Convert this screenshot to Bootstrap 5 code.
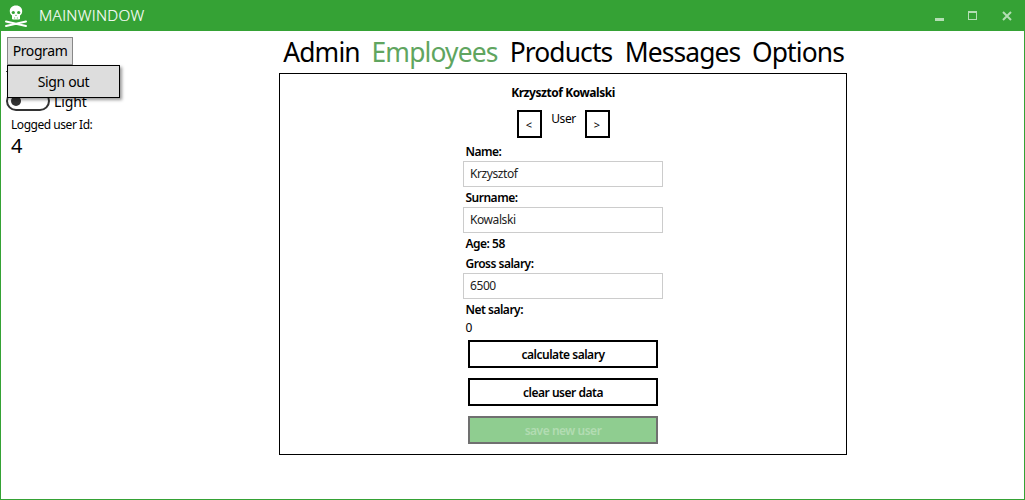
<!DOCTYPE html>
<html lang="en">
<head>
<meta charset="utf-8">
<title>MainWindow</title>
<link href="https://cdn.jsdelivr.net/npm/bootstrap@5.3.0/dist/css/bootstrap.min.css" rel="stylesheet">
<style>
body{font-family:"Noto Sans","Open Sans",sans-serif;font-size:12px;line-height:16px;color:#000;letter-spacing:-.42px}
.window{height:500px;border:1px solid #35a235;border-top:0}
.titlebar{height:31px;margin:0 -1px;background:#35a235;padding-left:4px}
.title-text{font-family:"Open Sans",sans-serif;font-size:15.4px;font-weight:300;letter-spacing:.3px;margin-left:11px;padding-top:1px;color:#fff;-webkit-text-stroke:.2px #fff}
.side{width:278px;padding:6px 0 0 6px}
.menu-btn{width:66px;height:28px;border:1px solid #888;background:#ddd;font-size:14px;letter-spacing:-.4px;padding:0;border-radius:0;color:#000;line-height:26px}
.drop{left:0;top:28px;width:113px;height:33px;min-width:0;background:#ddd;border:1px solid #000;border-radius:0;box-shadow:2px 2px 3px rgba(0,0,0,.4);font-size:14px;letter-spacing:-.35px;line-height:32px;text-align:center;padding:0;color:#000}
.theme-mark{width:2px;height:1px;background:#444;margin:6px 0 0 -1px}
.theme-row{height:20px;margin:19px 0 0 -1px;font-size:14px;letter-spacing:-.1px}
.theme-row .toggle{width:44px;height:20px;border:2px solid #333;border-radius:10px;padding-left:3px}
.toggle i{width:10px;height:10px;border-radius:50%;background:#333}
.caption{padding-top:2px}
.user-label{margin:6px 0 0 4px;letter-spacing:-.46px}
.user-id{margin-left:4px;line-height:25px;font-size:20px}
.tabs{display:grid;grid-template-columns:89px 137px 116px 127px 104px;margin-left:-2px;height:42px;font-size:26.4px;line-height:43px;text-align:center;letter-spacing:-.87px;white-space:nowrap}
.tabs .on{color:#60a560}
.panel{width:568px;height:382px;border:1px solid #000;padding-top:11px}
.panel .owner{letter-spacing:-.45px}
.prev-next{padding-top:9px}
.prev-next span{width:43px;padding:1px 0 0 1px}
.arrow{width:25px;height:28px;border:2px solid #000;border-radius:0;padding:0;font-size:11px;line-height:25px;color:#000}
.form{width:200px;margin:6px 0 0 183px}
.form label{display:block;height:17px;line-height:16px;padding-left:2.500px;font-weight:600;letter-spacing:-.5px}
.form .age{height:20px}
.form .net{height:21px;line-height:18px;padding-left:2.500px}
.form .form-control{height:26px;border:1px solid #ccc;border-radius:0;padding:0 6px 2px;font-size:12px;letter-spacing:-.42px;color:#222;margin-bottom:3px}
.act{display:block;width:190px;height:28px;margin:0 0 10px 5px;border:2px solid #000;border-radius:0;padding:0;font-size:12px;line-height:25px;font-weight:600;letter-spacing:-.48px;color:#000}
.act:disabled{opacity:1;background:#8fcd90;border-color:#707070;color:#b2dcb2}
</style>
</head>
<body>
<div class="window">
  <header class="titlebar d-flex align-items-center">
    <svg width="24" height="24" viewBox="0 0 24 24">
      <path d="M2 17.500 22 22M2 22 22 17.500" stroke="#fff" stroke-width="2" stroke-linecap="round"/>
      <path d="M12 1.500c-4 0-6.200 2.500-6.200 5.700 0 2 .8 3.300 2.200 4.200V15l1 .5h6l1-.5v-3.600c1.400-.9 2.200-2.200 2.200-4.200 0-3.200-2.200-5.700-6.200-5.700z" fill="#fff"/>
      <circle cx="9.300" cy="8.500" r="1.600" fill="#35a235"/><circle cx="14.700" cy="8.500" r="1.600" fill="#35a235"/>
      <path d="m12 10.500-.8 1.500h1.600zM10.300 13.500h.8v1h-.8zM12.900 13.500h.8v1h-.8z" fill="#35a235"/>
    </svg>
    <span class="title-text">MAINWINDOW</span>
    <svg class="ms-auto" width="90" height="31" viewBox="0 0 90 31" fill="none" stroke="#b4deb4" shape-rendering="crispEdges">
      <path d="M0 19.500h9" stroke-width="3"/>
      <path d="M33.500 11.500h8v8h-8zM33 12.500h9"/>
      <path d="m68 12 8 8M76 12l-8 8" stroke-width="2" shape-rendering="auto"/>
    </svg>
  </header>
  <div class="d-flex">
    <aside class="side">
      <div class="position-relative">
        <button class="btn menu-btn d-block">Program</button>
        <div class="dropdown-menu show drop">Sign out</div>
      </div>
      <div class="theme-mark"></div>
      <div class="theme-row d-flex align-items-center">
        <span class="toggle d-flex align-items-center"><i></i></span><span class="ms-1 caption">Light</span>
      </div>
      <div class="user-label">Logged user Id:</div>
      <div class="user-id">4</div>
    </aside>
    <main>
      <nav class="tabs"><span>Admin</span><span class="on">Employees</span><span>Products</span><span>Messages</span><span>Options</span></nav>
      <section class="panel">
        <div class="fw-bold text-center owner">Krzysztof Kowalski</div>
        <div class="d-flex justify-content-center prev-next">
          <button class="btn arrow">&lt;</button><span class="text-center">User</span><button class="btn arrow">&gt;</button>
        </div>
        <div class="form">
          <label>Name:</label><input class="form-control" value="Krzysztof">
          <label>Surname:</label><input class="form-control" value="Kowalski">
          <label class="age">Age: 58</label>
          <label>Gross salary:</label><input class="form-control" value="6500">
          <label>Net salary:</label>
          <div class="net">0</div>
          <button class="btn act">calculate salary</button>
          <button class="btn act">clear user data</button>
          <button class="btn act" disabled>save new user</button>
        </div>
      </section>
    </main>
  </div>
</div>
<script src="https://cdn.jsdelivr.net/npm/bootstrap@5.3.0/dist/js/bootstrap.bundle.min.js"></script>
</body>
</html>
